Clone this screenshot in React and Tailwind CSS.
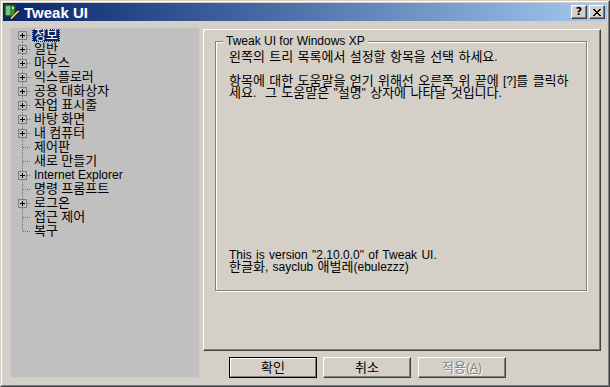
import React from "react";

const items = [
  { t: "정보", plus: true, sel: true },
  { t: "일반", plus: true },
  { t: "마우스", plus: true },
  { t: "익스플로러", plus: true },
  { t: "공용 대화상자", plus: true },
  { t: "작업 표시줄", plus: true },
  { t: "바탕 화면", plus: true },
  { t: "내 컴퓨터", plus: true },
  { t: "제어판" },
  { t: "새로 만들기" },
  { t: "Internet Explorer", plus: true },
  { t: "명령 프롬프트" },
  { t: "로그온", plus: true },
  { t: "접근 제어" },
  { t: "복구" },
];

function K({ s }) {
  const parts = s.split(/([\uAC00-\uD7A3]+)/);
  return (
    <span>
      {parts.map((p, i) =>
        /[\uAC00-\uD7A3]/.test(p) ? (
          <span key={i} className="text-[13px] leading-[0px]">
            {p}
          </span>
        ) : (
          p
        )
      )}
    </span>
  );
}

function Connector({ first, last, plus }) {
  const y1 = first ? 7 : 0;
  const y2 = last ? 7 : 14;
  return (
    <svg width="17" height="14" className="shrink-0" shapeRendering="crispEdges">
      <line x1="8.5" y1={y1} x2="8.5" y2={y2} stroke="#707070" strokeDasharray="1 1" />
      <line x1={plus ? 13 : 9} y1="7.5" x2="17" y2="7.5" stroke="#707070" strokeDasharray="1 1" />
      {plus && (
        <g>
          <rect x="4.5" y="3.5" width="8" height="8" fill="#c0c0c0" stroke="#808080" />
          <line x1="6" y1="7.5" x2="11" y2="7.5" stroke="#000" />
          <line x1="8.5" y1="5" x2="8.5" y2="10" stroke="#000" />
        </g>
      )}
    </svg>
  );
}

function Btn({ children, def, disabled }) {
  if (def) {
    return (
      <div className="w-[88px] h-[21px] flex border border-black">
        <div className="flex-1 flex items-center justify-center border border-t-white border-l-white border-r-[#808080] border-b-[#808080]">
          <span className="text-black">{children}</span>
        </div>
      </div>
    );
  }
  return (
    <div className="w-[88px] h-[21px] flex">
      <div className="flex-1 flex items-center justify-center border border-t-white border-l-white border-r-[#404040] border-b-[#404040] shadow-[inset_-1px_-1px_0_#808080]">
        <span className={disabled ? "text-[#808080] [text-shadow:1px_1px_0_#ffffff]" : "text-black"}>{children}</span>
      </div>
    </div>
  );
}

export default function App() {
  return (
    <div className="w-[610px] h-[387px] flex border border-t-[#d4d0c8] border-l-[#d4d0c8] border-r-[#404040] border-b-[#404040] font-['Liberation_Sans','Noto_Sans_CJK_KR',sans-serif] text-[12px] text-black">
      <div className="flex-1 flex border border-t-white border-l-white border-r-[#808080] border-b-[#808080]">
        <div className="flex-1 flex flex-col bg-[#d4d0c8] p-[1px]">
          {/* Title bar */}
          <div className="h-[18px] flex items-center bg-gradient-to-r from-[#0a246a] to-[#a6caf0] pl-[1px] pr-[2px]">
            <svg width="16" height="16" viewBox="0 0 16 16" className="shrink-0">
              <rect x="1" y="1" width="10" height="11" fill="#3c8c3c" stroke="#1e4e1e" />
              <rect x="2" y="2" width="4" height="9" fill="#7cc47c" />
              <rect x="8" y="3" width="2" height="2" fill="#c8e8c8" />
              <path d="M6 14 L14 6 L15.5 7.5 L7.5 15.5 Z" fill="#f0d040" stroke="#303030" strokeWidth="0.7" />
              <path d="M6 14 L5.2 15.8 L7.5 15.5 Z" fill="#202020" />
            </svg>
            <span className="ml-[4px] text-white font-bold text-[15px] leading-none">Tweak UI</span>
            <div className="ml-auto flex items-center">
              <div className="w-[16px] h-[14px] flex items-center justify-center bg-[#d4d0c8] border border-t-white border-l-white border-r-[#404040] border-b-[#404040] shadow-[inset_-1px_-1px_0_#808080]">
                <span className="font-['DejaVu_Sans',sans-serif] font-bold text-[11px] leading-none text-black -mt-[1px]">?</span>
              </div>
              <div className="ml-[2px] w-[16px] h-[14px] flex items-center justify-center bg-[#d4d0c8] border border-t-white border-l-white border-r-[#404040] border-b-[#404040] shadow-[inset_-1px_-1px_0_#808080]">
                <svg width="8" height="7" viewBox="0 0 8 7" shapeRendering="crispEdges">
                  <path d="M0 0h2v1h-2zM6 0h2v1h-2zM1 1h2v1h-2zM5 1h2v1h-2zM2 2h4v1h-4zM3 3h2v1h-2zM2 4h4v1h-4zM1 5h2v1h-2zM5 5h2v1h-2zM0 6h2v1h-2zM6 6h2v1h-2z" fill="#000" />
                </svg>
              </div>
            </div>
          </div>

          {/* Client */}
          <div className="flex-1 flex pl-[7px] pt-[6px]">
            {/* Tree */}
            <div className="w-[190px] h-[351px] bg-[#c0c0c0] border border-[#cbcbcb] pl-[3px] flex flex-col">
              {items.map((it, i) => (
                <div key={i} className="h-[14px] flex items-center leading-[14px] whitespace-nowrap">
                  <Connector first={i === 0} last={i === items.length - 1} plus={it.plus} />
                  <span
                    className={
                      it.sel
                        ? "ml-[1px] h-[13px] px-[1px] flex items-center bg-[#0a246a] text-white border border-dotted border-[#d8c890]"
                        : "ml-[1px] h-[13px] px-[2px] flex items-center"
                    }
                  >
                    <K s={it.t} />
                  </span>
                </div>
              ))}
            </div>

            {/* Right column */}
            <div className="ml-[3px] pt-[2px] flex flex-col">
              <div className="w-[398px] h-[322px] border border-t-white border-l-white border-r-[#404040] border-b-[#404040] shadow-[inset_-1px_-1px_0_#808080] pl-[11px] pt-[11px]">
                <div className="relative w-[372px] h-[250px] border border-[#808080] shadow-[inset_1px_1px_0_#ffffff,1px_1px_0_#ffffff] pl-[13px] pt-[9px] pb-[17px] flex flex-col leading-[12px] [word-spacing:1px]">
                  <span className="absolute left-[7px] -top-[7px] bg-[#d4d0c8] px-[3px] leading-[13px] [word-spacing:0px]">Tweak UI for Windows XP</span>
                  <div>
                    <K s="왼쪽의 트리 목록에서 설정할 항목을 선택 하세요." />
                  </div>
                  <div className="mt-[12px]">
                    <div>
                      <K s="항목에 대한 도움말을 얻기 위해선 오른쪽 위 끝에 [?]를 클릭하" />
                    </div>
                    <div>
                      <K s={'세요.\u00a0 그 도움말은 "설명" 상자에 나타날 것입니다.'} />
                    </div>
                  </div>
                  <div className="mt-auto">
                    <div>This is version "2.10.0.0" of Tweak UI.</div>
                    <div>
                      <K s="한글화, sayclub 애벌레(ebulezzz)" />
                    </div>
                  </div>
                </div>
              </div>

              {/* Buttons */}
              <div className="mt-[6px] ml-[26px] flex">
                <Btn def>
                  <K s="확인" />
                </Btn>
                <div className="ml-[6px]">
                  <Btn>
                    <K s="취소" />
                  </Btn>
                </div>
                <div className="ml-[7px]">
                  <Btn disabled>
                    <K s="적용" />(<span className="underline">A</span>)
                  </Btn>
                </div>
              </div>
            </div>
          </div>
        </div>
      </div>
    </div>
  );
}
